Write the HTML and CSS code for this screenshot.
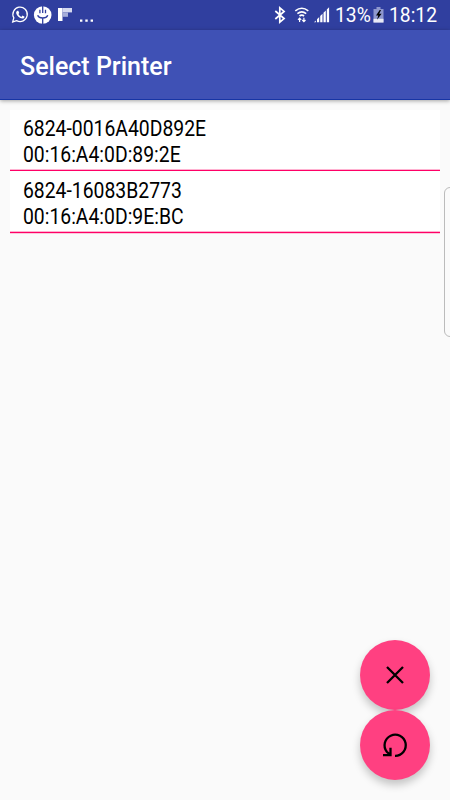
FILE: index.html
```html
<!DOCTYPE html>
<html lang="en">
<head>
<meta charset="utf-8">
<title>Select Printer</title>
<link rel="stylesheet" href="styles.css">
</head>
<body>
<div class="status">
  <svg class="notifications" width="100" height="30" viewBox="0 0 100 30">
    <path d="M12.7 21.9l1.1-4.1a7.2 7.2 0 1 1 2.8 2.8z" fill="none" stroke="#fff" stroke-width="1.3"/>
    <path d="M17.3 10.8l1-.1 1 2.3-.9 1.1q1 2 2.9 2.8l1.2-1.3 2.1 1.1q-.2 1.9-2.2 1.9-4.9-.6-6.3-5.5-.1-1.4 1.2-2.3z" fill="#fff"/>
    <circle cx="42.7" cy="15" r="8.8" fill="#fff"/>
    <path d="M42.7 6v7M42.7 17.5V24M39.9 9.8v3.4M45.5 9.8v3.4M37.6 15.2q1.2 2.8 5.1 2.8t5.1-2.8" fill="none" stroke="#303f9f" stroke-width="1.3"/>
    <path d="M58 8h4.5v13H58z" fill="#fff"/>
    <path d="M62.5 8H72v4.4h-9.5z" fill="#d5d9ef"/>
    <path d="M62.5 12.4H68v4.4h-5.5z" fill="#a5add9"/>
    <path d="M80 19.5h2.4v2.3H80zM85.3 19.5h2.4v2.3h-2.4zM90.6 19.5H93v2.3h-2.4z" fill="#fff"/>
  </svg>
  <div class="system">
    <svg width="65" height="30" viewBox="270 0 65 30" fill="none" stroke="#fff">
      <path d="M275.3 11l8.8 7.6-4.3 3.6V7.8l4.3 3.6-8.8 7.6" stroke-width="1.7"/>
      <path d="M295.3 10.9q6.5-5.2 13 0M297.4 13.6q4.4-3.4 8.8 0M299.5 16q2.3-1.7 4.6 0" stroke-width="1.6"/>
      <path d="M299.6 22v-4M298 19.8l1.6-1.7 1.6 1.7M303.9 17.8v4M302.3 20l1.6 1.7 1.6-1.7" stroke-width="1.2"/>
      <path d="M314 22.3l1.8-1.8v1.8zM317 22.3v-3l2.2-2.2v5.2zM320.2 22.3v-6.2l2.3-2.3v8.5zM323.5 22.3v-9.5l2.3-2.3v11.8zM326.8 22.3V9.5l2.3-2.3v15.1z" fill="#fff" stroke="none"/>
    </svg>
    <span class="percent">13%</span>
    <svg class="battery" width="12" height="30" viewBox="0 0 12 30">
      <path d="M3.5 7h4v2h3v13.5h-10V9h3z" fill="#8f98ce"/>
      <path d="M.5 18.8h10v3.7H.5z" fill="#e8eaf6"/>
      <path d="M6.7 10L3 15.6h2.3L4 19.8l4.6-6H6.2L8 10z" fill="#000"/>
    </svg>
    <span class="clock">18:12</span>
  </div>
</div>
<header class="bar"><h1>Select Printer</h1></header>
<main class="content">
  <ul class="printers">
    <li><span class="name">6824-0016A40D892E</span><span class="mac">00:16:A4:0D:89:2E</span></li>
    <li><span class="name">6824-16083B2773</span><span class="mac">00:16:A4:0D:9E:BC</span></li>
  </ul>
  <div class="actions">
    <button class="fab" aria-label="Cancel"><svg width="70" height="70" viewBox="0 0 70 70"><path d="M27 27l16 16M43 27l-16 16"/></svg></button>
    <button class="fab" aria-label="Refresh"><svg width="70" height="70" viewBox="0 0 70 70"><path d="M35 45.9a10.6 10.6 0 1 0-8.2-4.1l3.4 3.1M23 45.2h7.5v-7.4"/></svg></button>
  </div>
</main>
<div class="edge"></div>
</body>
</html>
```

FILE: styles.css
```css
* { box-sizing: border-box; }
body {
  margin: 0;
  height: 800px;
  overflow: hidden;
  position: relative;
  display: flex;
  flex-direction: column;
  background: #fafafa;
  font-family: Roboto, sans-serif;
}
svg { display: block; flex: none; }
.status {
  height: 30px;
  flex: none;
  display: flex;
  justify-content: space-between;
  background: #303f9f;
  color: #fff;
}
.system {
  width: 180px;
  display: flex;
  font-size: 19.3px;
  line-height: 32px;
  white-space: nowrap;
}
.percent { width: 38px; }
.battery { margin-right: 4px; }
.bar {
  height: 70px;
  flex: none;
  padding-left: 20px;
  background: #3f51b5;
  border-bottom: 1px solid #1735a5;
  box-shadow: 0 1px 4px rgba(0, 0, 0, .35);
}
h1 {
  margin: 0;
  color: #fff;
  font-size: 25px;
  font-weight: 500;
  line-height: 74px;
}
.content {
  flex: 1;
  display: flex;
  flex-direction: column;
  justify-content: space-between;
  padding: 10px 10px 20px;
}
.printers { margin: 0; padding: 0; list-style: none; }
.printers li {
  height: 62px;
  padding: 7px 0 0 12.5px;
  display: flex;
  flex-direction: column;
  align-items: flex-start;
  background: #fff;
  border-bottom: 1px solid #ff0066;
  box-shadow: 0 1px rgba(255, 0, 102, .2), inset 0 -1px rgba(255, 0, 102, .3);
}
.printers li:first-child { height: 61px; padding-top: 6px; }
.printers li + li { background-clip: padding-box; }
.printers span {
  font-size: 21.5px;
  line-height: 26px;
  color: #000;
  transform: scaleX(.9);
  transform-origin: left;
}
.actions {
  align-self: flex-end;
  padding-right: 10px;
}
.fab {
  display: block;
  width: 70px;
  height: 70px;
  padding: 0;
  border: 0;
  border-radius: 50%;
  background: #ff4081;
  box-shadow: 0 5px 9px rgba(0, 0, 0, .22);
}
.fab path { fill: none; stroke: #000; stroke-width: 2.3; }
.edge {
  position: absolute;
  left: 444px;
  top: 187px;
  width: 12px;
  height: 150px;
  border: 1px solid #bbb;
  border-radius: 6px;
  background: #fafafa;
}
```
